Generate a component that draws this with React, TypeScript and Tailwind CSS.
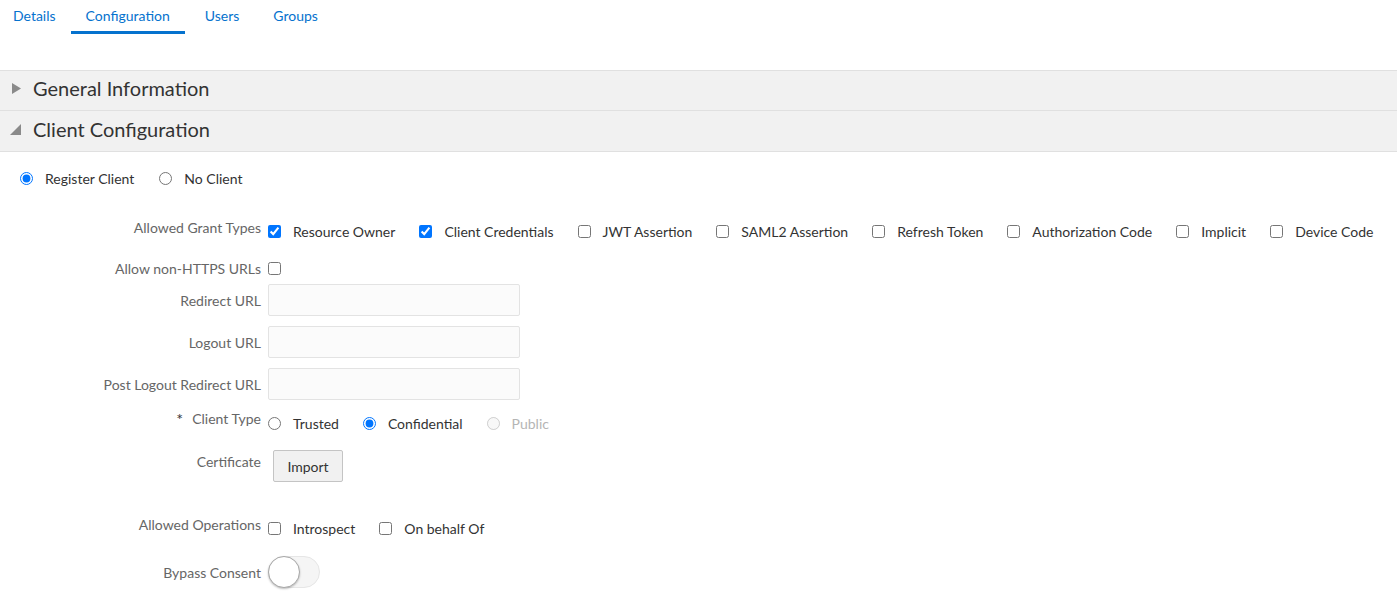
import React from "react";

const font = { fontFamily: '"Lato", "Segoe UI", "Noto Sans", sans-serif' };

function Check({ label, checked = false, last = false }: { label: string; checked?: boolean; last?: boolean }) {
  return (
    <label className={`flex items-center ${last ? "" : "mr-[24px]"}`}>
      <input type="checkbox" defaultChecked={checked} className="m-0 w-[13px] h-[13px]" />
      <span className="ml-[12px] text-[14px] text-[#333]">{label}</span>
    </label>
  );
}

function Radio({ label, checked = false, disabled = false, name, gap = "mr-[25px]" }: { label: string; checked?: boolean; disabled?: boolean; name: string; gap?: string }) {
  return (
    <label className={`flex items-center ${gap}`}>
      <input type="radio" name={name} defaultChecked={checked} disabled={disabled} className="m-0 w-[13px] h-[13px]" />
      <span className={`ml-[12px] text-[14px] ${disabled ? "text-[#b5b5b5]" : "text-[#333]"}`}>{label}</span>
    </label>
  );
}

function Label({ children, className = "" }: { children: React.ReactNode; className?: string }) {
  return <div className={`w-[261px] shrink-0 text-right text-[14px] text-[#666] ${className}`}>{children}</div>;
}

export default function App() {
  return (
    <div className="w-[1397px] h-[591px] bg-white overflow-hidden" style={font}>
      {/* Tabs */}
      <div className="flex h-[70px] items-start -ml-[2px]">
        <div className="px-[15px] pt-[5px] h-[34px] text-[14px] text-[#0572ce]">Details</div>
        <div className="px-[15px] pt-[5px] h-[34px] text-[14px] text-[#0572ce] border-b-[3px] border-[#0572ce] mr-[5px]">Configuration</div>
        <div className="px-[15px] pt-[5px] h-[34px] text-[14px] text-[#0572ce] mr-[4px]">Users</div>
        <div className="px-[15px] pt-[5px] h-[34px] text-[14px] text-[#0572ce]">Groups</div>
      </div>

      {/* Section headers */}
      <div className="border-t border-[#e0e0e0] bg-[#f1f1f1] h-[41px] flex items-center border-b border-b-[#e0e0e0] pb-[5px]">
        <svg width="9" height="11" viewBox="0 0 9 11" className="ml-[12px] mr-[12px]">
          <path d="M0 0 L9 5.5 L0 11 Z" fill="#8a8a8a" />
        </svg>
        <span className="text-[20px] text-[#333]">General Information</span>
      </div>
      <div className="bg-[#f1f1f1] h-[41px] flex items-center border-b border-[#e0e0e0] pb-[4px]">
        <svg width="11" height="11" viewBox="0 0 11 11" className="ml-[10px] mr-[12px]">
          <path d="M11 0 L11 11 L0 11 Z" fill="#8a8a8a" />
        </svg>
        <span className="text-[20px] text-[#333]">Client Configuration</span>
      </div>

      {/* Register / No client */}
      <div className="flex items-center pl-[20px] mt-[19px] h-[14px]">
        <Radio name="reg" label="Register Client" checked />
        <Radio name="reg" label="No Client" />
      </div>

      {/* Form */}
      <div className="mt-[34px]">
        <div className="flex items-start h-[28px]">
          <Label className="leading-[18px]">Allowed Grant Types</Label>
          <div className="flex items-center ml-[7px] mt-[2px]">
            <Check label="Resource Owner" checked />
            <Check label="Client Credentials" checked />
            <Check label="JWT Assertion" />
            <Check label="SAML2 Assertion" />
            <Check label="Refresh Token" />
            <Check label="Authorization Code" />
            <Check label="Implicit" />
            <Check label="Device Code" last />
          </div>
        </div>

        <div className="flex items-center h-[18px] mt-[12px]">
          <Label>Allow non-HTTPS URLs</Label>
          <input type="checkbox" className="m-0 ml-[7px] w-[13px] h-[13px]" />
        </div>

        {["Redirect URL", "Logout URL", "Post Logout Redirect URL"].map((l, i) => (
          <div key={l} className={`flex items-center ${i === 0 ? "mt-[7px]" : "mt-[10px]"}`}>
            <Label>{l}</Label>
            <div className="ml-[7px] w-[252px] h-[32px] bg-[#fbfbfb] border border-[#e3e3e3] rounded-[2px]" />
          </div>
        ))}

        <div className="flex items-start mt-[10px] h-[30px]">
          <Label className="leading-[18px]">
            <span className="text-[#333] align-top text-[16px] mr-[9px]">*</span>Client Type
          </Label>
          <div className="flex items-center ml-[7px] mt-[3px]">
            <Radio name="ct" label="Trusted" gap="mr-[24px]" />
            <Radio name="ct" label="Confidential" checked gap="mr-[24px]" />
            <Radio name="ct2" label="Public" disabled gap="" />
          </div>
        </div>

        <div className="flex items-start mt-[10px]">
          <Label className="leading-[18px] mt-[3px]">Certificate</Label>
          <button className="ml-[12px] w-[70px] h-[32px] bg-[#f1f1f1] border border-[#c4c4c4] rounded-[2px] text-[14px] text-[#333]">
            Import
          </button>
        </div>

        <div className="flex items-start mt-[34px] h-[30px]">
          <Label className="leading-[18px]">Allowed Operations</Label>
          <div className="flex items-center ml-[7px] mt-[2px]">
            <Check label="Introspect" />
            <Check label="On behalf Of" />
          </div>
        </div>

        <div className="flex items-center mt-[10px]">
          <Label>Bypass Consent</Label>
          <div className="ml-[7px] w-[52px] h-[32px] rounded-full bg-[#f5f5f5] border border-[#e6e6e6] relative">
            <div className="absolute left-[-1px] top-[-1px] w-[32px] h-[32px] rounded-full bg-white border border-[#a8a8a8] shadow-[0_1px_2px_rgba(0,0,0,0.25)]" />
          </div>
        </div>
      </div>
    </div>
  );
}
